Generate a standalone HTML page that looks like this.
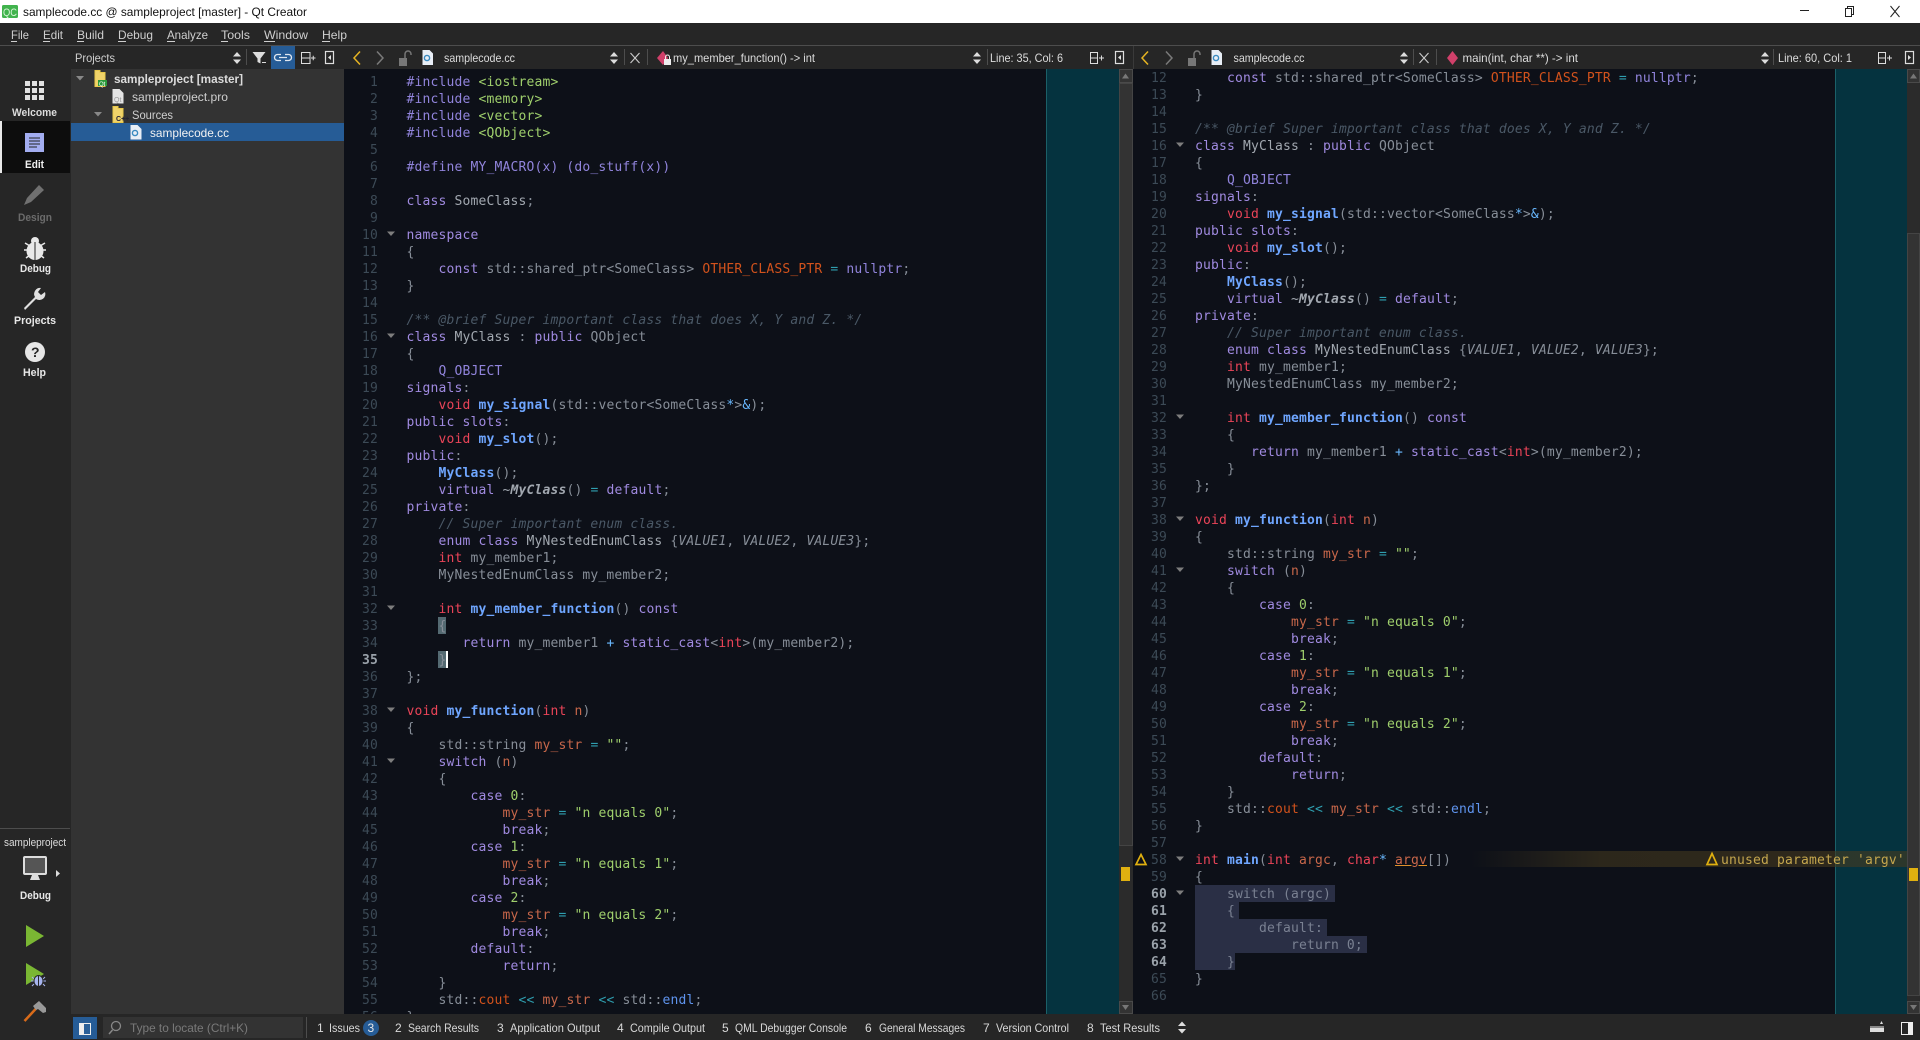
<!DOCTYPE html>
<html lang="en">
<head>
<meta charset="utf-8">
<title>samplecode.cc @ sampleproject [master] - Qt Creator</title>
<style>
html,body{margin:0;padding:0;width:1920px;height:1040px;overflow:hidden;background:#262626}
.a{position:absolute}
pre{margin:0;font-family:"DejaVu Sans Mono","Liberation Mono",monospace;font-size:13px;letter-spacing:.17px;line-height:17px;color:#878e98;white-space:pre}
.ln{color:#3c4a56;text-align:right;width:32px}
.ln b{color:#9aa2aa}
.k{color:#a08ae0}.t{color:#ea4458}.f{color:#6fa6ff;font-weight:bold}
.c{color:#4a5866;font-style:italic}.s{color:#9fcf6c}.v{color:#d2521c}
.m{color:#c8674a}.o{color:#2f9fb0}.u{color:#6ab9ff}.d{color:#9184dc}
.i{font-style:italic}.w{color:#a2a8b0}.e{color:#5f94ee}
.h{color:#7a8192}
svg text{font-family:"Liberation Sans",sans-serif;font-size:12px}
</style>
</head>
<body>
<!-- backgrounds -->
<div class="a" style="left:0;top:0;width:1920px;height:23px;background:#fff"></div>
<div class="a" style="left:0;top:45px;width:1920px;height:1px;background:#4d4d4d"></div>
<div class="a" style="left:0;top:121px;width:70px;height:52px;background:#0d0d0d"></div>
<div class="a" style="left:0;top:121px;width:2px;height:52px;background:#e8e8e8"></div>
<div class="a" style="left:71px;top:69px;width:273px;height:945px;background:#333"></div>
<div class="a" style="left:71px;top:123px;width:272px;height:18px;background:#265c96"></div>

<!-- left editor -->
<div class="a" style="left:344px;top:69px;width:775px;height:945px;background:#0d1018;overflow:hidden">
<div class="a" style="left:702px;top:0;width:73px;height:945px;background:#05333f;border-left:1px solid #1b6068;box-sizing:border-box"></div>
<div class="a" style="left:94px;top:548px;width:8px;height:17px;background:#546a72"></div>
<div class="a" style="left:94px;top:582px;width:8px;height:17px;background:#546a72"></div>
<div class="a" style="left:102px;top:582px;width:2px;height:17px;background:#fff"></div>
<pre class="a ln" style="left:2px;top:5px">1
2
3
4
5
6
7
8
9
10
11
12
13
14
15
16
17
18
19
20
21
22
23
24
25
26
27
28
29
30
31
32
33
34
<b>35</b>
36
37
38
39
40
41
42
43
44
45
46
47
48
49
50
51
52
53
54
55
56</pre>
<pre class="a" style="left:62.5px;top:5px"><span class="d">#include</span> <span class="s">&lt;iostream&gt;</span>
<span class="d">#include</span> <span class="s">&lt;memory&gt;</span>
<span class="d">#include</span> <span class="s">&lt;vector&gt;</span>
<span class="d">#include</span> <span class="s">&lt;QObject&gt;</span>

<span class="d">#define MY_MACRO(x) (do_stuff(x))</span>

<span class="k">class</span> <span class="w">SomeClass</span>;

<span class="k">namespace</span>
{
    <span class="k">const</span> std::shared_ptr&lt;SomeClass&gt; <span class="v">OTHER_CLASS_PTR</span> <span class="o">=</span> <span class="d">nullptr</span>;
}

<span class="c">/** @brief Super important class that does X, Y and Z. */</span>
<span class="k">class</span> <span class="w">MyClass</span> : <span class="k">public</span> QObject
{
    <span class="d">Q_OBJECT</span>
<span class="k">signals</span>:
    <span class="t">void</span> <span class="f">my_signal</span>(std::vector&lt;SomeClass<span class="u">*</span>&gt;<span class="u">&amp;</span>);
<span class="k">public slots</span>:
    <span class="t">void</span> <span class="f">my_slot</span>();
<span class="k">public</span>:
    <span class="f">MyClass</span>();
    <span class="k">virtual</span> <span class="w i">~<b>MyClass</b></span>() <span class="o">=</span> <span class="k">default</span>;
<span class="k">private</span>:
    <span class="c">// Super important enum class.</span>
    <span class="k">enum class</span> <span class="w">MyNestedEnumClass</span> {<span class="i">VALUE1</span>, <span class="i">VALUE2</span>, <span class="i">VALUE3</span>};
    <span class="t">int</span> my_member1;
    MyNestedEnumClass my_member2;

    <span class="t">int</span> <span class="f">my_member_function</span>() <span class="k">const</span>
    {
       <span class="k">return</span> my_member1 <span class="u">+</span> <span class="k">static_cast</span>&lt;<span class="t">int</span>&gt;(my_member2);
    }
};

<span class="t">void</span> <span class="f">my_function</span>(<span class="t">int</span> <span class="m">n</span>)
{
    std::string <span class="m">my_str</span> <span class="o">=</span> <span class="s">""</span>;
    <span class="k">switch</span> (<span class="m">n</span>)
    {
        <span class="k">case</span> <span class="s">0</span>:
            <span class="m">my_str</span> <span class="o">=</span> <span class="s">"n equals 0"</span>;
            <span class="k">break</span>;
        <span class="k">case</span> <span class="s">1</span>:
            <span class="m">my_str</span> <span class="o">=</span> <span class="s">"n equals 1"</span>;
            <span class="k">break</span>;
        <span class="k">case</span> <span class="s">2</span>:
            <span class="m">my_str</span> <span class="o">=</span> <span class="s">"n equals 2"</span>;
            <span class="k">break</span>;
        <span class="k">default</span>:
            <span class="k">return</span>;
    }
    std::<span class="v">cout</span> <span class="o">&lt;&lt;</span> <span class="m">my_str</span> <span class="o">&lt;&lt;</span> std::<span class="e">endl</span>;
}</pre>
</div>

<!-- right editor -->
<div class="a" style="left:1133px;top:69px;width:774px;height:945px;background:#0d1018;overflow:hidden">
<div class="a" style="left:702px;top:0;width:72px;height:945px;background:#05333f;border-left:1px solid #1b6068;box-sizing:border-box"></div>
<div class="a" style="left:338px;top:782px;width:436px;height:16px;background:linear-gradient(90deg,rgba(70,58,30,0),rgba(70,58,30,.55) 30%,rgba(70,58,30,.6))"></div>
<div class="a" style="left:62px;top:816px;width:140px;height:17px;background:#2a2f45"></div>
<div class="a" style="left:62px;top:833px;width:44px;height:17px;background:#2a2f45"></div>
<div class="a" style="left:62px;top:850px;width:132px;height:17px;background:#2a2f45"></div>
<div class="a" style="left:62px;top:867px;width:172px;height:17px;background:#2a2f45"></div>
<div class="a" style="left:62px;top:884px;width:40px;height:17px;background:#2a2f45"></div>
<pre class="a ln" style="left:2px;top:1px">12
13
14
15
16
17
18
19
20
21
22
23
24
25
26
27
28
29
30
31
32
33
34
35
36
37
38
39
40
41
42
43
44
45
46
47
48
49
50
51
52
53
54
55
56
57
58
59
<b>60</b>
<b>61</b>
<b>62</b>
<b>63</b>
<b>64</b>
65
66</pre>
<pre class="a" style="left:62px;top:1px">    <span class="k">const</span> std::shared_ptr&lt;SomeClass&gt; <span class="v">OTHER_CLASS_PTR</span> <span class="o">=</span> <span class="d">nullptr</span>;
}

<span class="c">/** @brief Super important class that does X, Y and Z. */</span>
<span class="k">class</span> <span class="w">MyClass</span> : <span class="k">public</span> QObject
{
    <span class="d">Q_OBJECT</span>
<span class="k">signals</span>:
    <span class="t">void</span> <span class="f">my_signal</span>(std::vector&lt;SomeClass<span class="u">*</span>&gt;<span class="u">&amp;</span>);
<span class="k">public slots</span>:
    <span class="t">void</span> <span class="f">my_slot</span>();
<span class="k">public</span>:
    <span class="f">MyClass</span>();
    <span class="k">virtual</span> <span class="w i">~<b>MyClass</b></span>() <span class="o">=</span> <span class="k">default</span>;
<span class="k">private</span>:
    <span class="c">// Super important enum class.</span>
    <span class="k">enum class</span> <span class="w">MyNestedEnumClass</span> {<span class="i">VALUE1</span>, <span class="i">VALUE2</span>, <span class="i">VALUE3</span>};
    <span class="t">int</span> my_member1;
    MyNestedEnumClass my_member2;

    <span class="t">int</span> <span class="f">my_member_function</span>() <span class="k">const</span>
    {
       <span class="k">return</span> my_member1 <span class="u">+</span> <span class="k">static_cast</span>&lt;<span class="t">int</span>&gt;(my_member2);
    }
};

<span class="t">void</span> <span class="f">my_function</span>(<span class="t">int</span> <span class="m">n</span>)
{
    std::string <span class="m">my_str</span> <span class="o">=</span> <span class="s">""</span>;
    <span class="k">switch</span> (<span class="m">n</span>)
    {
        <span class="k">case</span> <span class="s">0</span>:
            <span class="m">my_str</span> <span class="o">=</span> <span class="s">"n equals 0"</span>;
            <span class="k">break</span>;
        <span class="k">case</span> <span class="s">1</span>:
            <span class="m">my_str</span> <span class="o">=</span> <span class="s">"n equals 1"</span>;
            <span class="k">break</span>;
        <span class="k">case</span> <span class="s">2</span>:
            <span class="m">my_str</span> <span class="o">=</span> <span class="s">"n equals 2"</span>;
            <span class="k">break</span>;
        <span class="k">default</span>:
            <span class="k">return</span>;
    }
    std::<span class="v">cout</span> <span class="o">&lt;&lt;</span> <span class="m">my_str</span> <span class="o">&lt;&lt;</span> std::<span class="e">endl</span>;
}

<span class="t">int</span> <span class="f">main</span>(<span class="t">int</span> <span class="m">argc</span>, <span class="t">char</span><span class="u">*</span> <span class="m" style="text-decoration:underline;text-decoration-color:#e0902a">argv</span>[])
{
<span class="h">    switch (argc)
    {
        default:
            return 0;
    }</span>
}
</pre>
<pre class="a" style="left:588px;top:783px;color:#c4a64e">unused parameter 'argv'</pre>
</div>

<!-- chrome overlay -->
<svg class="a" style="left:0;top:0" width="1920" height="1040" viewBox="0 0 1920 1040" xmlns="http://www.w3.org/2000/svg">
<!-- title bar -->
<rect x="2" y="5" width="16" height="13" rx="1.5" fill="#41b34d"/>
<text x="3" y="16" textLength="14" lengthAdjust="spacingAndGlyphs" fill="#d8f5d8" style="font-size:11px">QC</text>
<text x="23" y="16" textLength="284" lengthAdjust="spacingAndGlyphs" fill="#111">samplecode.cc @ sampleproject [master] - Qt Creator</text>
<rect x="1800" y="10" width="9" height="1" fill="#222"/>
<path d="M1845.500 8.500h6v8h-6zM1847.500 8.500v-2h6v8h-2" fill="none" stroke="#222"/>
<path d="M1890.500 6l9 11M1899.500 6l-9 11" fill="none" stroke="#222"/>
<!-- menu -->
<g fill="#cfcfcf">
<text x="11" y="39" textLength="18" lengthAdjust="spacingAndGlyphs">File</text><rect x="11" y="41" width="6" height="1"/>
<text x="43" y="39" textLength="20" lengthAdjust="spacingAndGlyphs">Edit</text><rect x="43" y="41" width="7" height="1"/>
<text x="77" y="39" textLength="27" lengthAdjust="spacingAndGlyphs">Build</text><rect x="77" y="41" width="7" height="1"/>
<text x="118" y="39" textLength="35" lengthAdjust="spacingAndGlyphs">Debug</text><rect x="118" y="41" width="8" height="1"/>
<text x="167" y="39" textLength="41" lengthAdjust="spacingAndGlyphs">Analyze</text><rect x="167" y="41" width="8" height="1"/>
<text x="221" y="39" textLength="29" lengthAdjust="spacingAndGlyphs">Tools</text><rect x="221" y="41" width="7" height="1"/>
<text x="264" y="39" textLength="44" lengthAdjust="spacingAndGlyphs">Window</text><rect x="264" y="41" width="11" height="1"/>
<text x="322" y="39" textLength="25" lengthAdjust="spacingAndGlyphs">Help</text><rect x="322" y="41" width="8" height="1"/>
</g>
<!-- projects toolbar -->
<text x="75" y="62" textLength="40" lengthAdjust="spacingAndGlyphs" fill="#cfcfcf">Projects</text>
<path d="M233 56.500l4-4.500 4 4.500zM233 59.500h8l-4 4.500z" fill="#ddd"/>
<rect x="246" y="49" width="1" height="16" fill="#4d4d4d"/>
<path d="M252.500 52h13l-5 6.500v5l-3-1.500v-3.500z" fill="#ddd"/><rect x="262" y="62" width="4" height="1" fill="#ddd"/>
<rect x="271" y="46" width="24" height="23" fill="#265c96"/>
<path d="M281 54.500h-3.500a3 3 0 0 0 0 6h3.500M285 54.500h3.500a3 3 0 0 1 0 6h-3.500M279 57.500h8" fill="none" stroke="#dfe7f0" stroke-width="1.300"/>
<path d="M301.500 52.500h8.500v11h-8.500zM301.500 58h8.500M311 58h4.500M313.250 55.700v4.600" fill="none" stroke="#ddd"/>
<rect x="325.500" y="51.500" width="8" height="12" fill="none" stroke="#ddd" stroke-width="1.200"/><path d="M331 55v5l-3-2.500z" fill="#ddd"/>
<!-- tree -->
<path d="M76 76h8l-4 4.500zM94 112h8l-4 4.500z" fill="#888"/>
<path d="M95 70.500h5v2h5v14h-10z" fill="#f0d36a" stroke="#e8c84a"/><rect x="98" y="80" width="9" height="6" fill="#2a9a3a"/>
<text x="99" y="86" fill="#fff" style="font-size:6px">Qt</text>
<path d="M113 106.500h5v2h5v14h-10z" fill="#f0d36a" stroke="#e8c84a"/>
<text x="116" y="121" fill="#223" style="font-size:7px;font-weight:bold">C++</text>
<text x="114" y="83" textLength="129" lengthAdjust="spacingAndGlyphs" fill="#dcdcdc" style="font-weight:bold">sampleproject [master]</text>
<path d="M112.500 89h7l4 4v10.500h-11z" fill="#e4e4e4"/><text x="114" y="102" fill="#999" style="font-size:7px">Qt</text>
<text x="132" y="101" textLength="96" lengthAdjust="spacingAndGlyphs" fill="#cfcfcf">sampleproject.pro</text>
<text x="132" y="119" textLength="41" lengthAdjust="spacingAndGlyphs" fill="#cfcfcf">Sources</text>
<path d="M130.500 125h7l4 4v10.500h-11z" fill="#e8eef6"/><circle cx="135" cy="133" r="2.600" fill="none" stroke="#3a8ac0" stroke-width="1.400"/>
<text x="150" y="137" textLength="79" lengthAdjust="spacingAndGlyphs" fill="#f2f2f2">samplecode.cc</text>
<!-- left editor toolbar -->
<path d="M360 51.500l-6 6.500 6 6.500" fill="none" stroke="#e6b422" stroke-width="1.500"/>
<path d="M377 51.500l6 6.500-6 6.500" fill="none" stroke="#7a7a7a" stroke-width="1.500"/>
<rect x="399" y="58" width="8" height="8" fill="#777"/><path d="M405 58v-4a3 3 0 0 1 6 0v1" fill="none" stroke="#777" stroke-width="1.500"/>
<path d="M422.500 50h7l3.500 3.500v11.500h-10.500z" fill="#e8eef6"/><circle cx="427" cy="58" r="2.600" fill="none" stroke="#3a8ac0" stroke-width="1.400"/>
<text x="444" y="62" textLength="71" lengthAdjust="spacingAndGlyphs" fill="#dcdcdc">samplecode.cc</text>
<path d="M610 56.500l4-4.500 4 4.500zM610 59.500h8l-4 4.500z" fill="#ddd"/>
<rect x="624" y="49" width="1" height="16" fill="#4d4d4d"/>
<path d="M630.500 53l9 10M639.500 53l-9 10" stroke="#ccc" fill="none" stroke-width="1.100"/>
<rect x="647" y="49" width="1" height="16" fill="#4d4d4d"/>
<path d="M657 58l6-7 5 7-5 7z" fill="#d0406a"/><rect x="664" y="59" width="7" height="6" fill="#eee"/><path d="M665.500 59v-2a2 2 0 0 1 4 0v2" fill="none" stroke="#eee"/>
<text x="673" y="62" textLength="142" lengthAdjust="spacingAndGlyphs" fill="#dcdcdc">my_member_function() -&gt; int</text>
<path d="M973 56.500l4-4.500 4 4.500zM973 59.500h8l-4 4.500z" fill="#ddd"/>
<rect x="987" y="49" width="1" height="16" fill="#4d4d4d"/>
<text x="990" y="62" textLength="73" lengthAdjust="spacingAndGlyphs" fill="#dcdcdc">Line: 35, Col: 6</text>
<path d="M1090.500 52.500h7v11h-7zM1090.500 58h7M1099 58h5M1101.500 55.500v5" fill="none" stroke="#ddd"/>
<rect x="1115.500" y="51.500" width="8" height="12" fill="none" stroke="#ddd" stroke-width="1.200"/><path d="M1121 55v5l-3-2.500z" fill="#ddd"/>
<!-- right editor toolbar -->
<rect x="1133" y="46" width="1" height="23" fill="#3a3a3a"/>
<path d="M1148 51.500l-6 6.500 6 6.500" fill="none" stroke="#e6b422" stroke-width="1.500"/>
<path d="M1166 51.500l6 6.500-6 6.500" fill="none" stroke="#7a7a7a" stroke-width="1.500"/>
<rect x="1188" y="58" width="8" height="8" fill="#777"/><path d="M1194 58v-4a3 3 0 0 1 6 0v1" fill="none" stroke="#777" stroke-width="1.500"/>
<path d="M1211.500 50h7l3.500 3.500v11.500h-10.500z" fill="#e8eef6"/><circle cx="1216" cy="58" r="2.600" fill="none" stroke="#3a8ac0" stroke-width="1.400"/>
<text x="1233.500" y="62" textLength="71" lengthAdjust="spacingAndGlyphs" fill="#dcdcdc">samplecode.cc</text>
<path d="M1400 56.500l4-4.500 4 4.500zM1400 59.500h8l-4 4.500z" fill="#ddd"/>
<rect x="1413" y="49" width="1" height="16" fill="#4d4d4d"/>
<path d="M1419.500 53l9 10M1428.500 53l-9 10" stroke="#ccc" fill="none" stroke-width="1.100"/>
<rect x="1436" y="49" width="1" height="16" fill="#4d4d4d"/>
<path d="M1447 58l5.500-7 5.500 7-5.500 7z" fill="#d0406a"/>
<text x="1462.500" y="62" textLength="115.500" lengthAdjust="spacingAndGlyphs" fill="#dcdcdc">main(int, char **) -&gt; int</text>
<path d="M1761 56.500l4-4.500 4 4.500zM1761 59.500h8l-4 4.500z" fill="#ddd"/>
<rect x="1773" y="49" width="1" height="16" fill="#4d4d4d"/>
<text x="1778" y="62" textLength="74" lengthAdjust="spacingAndGlyphs" fill="#dcdcdc">Line: 60, Col: 1</text>
<path d="M1878.500 52.500h7v11h-7zM1878.500 58h7M1887 58h5M1889.500 55.500v5" fill="none" stroke="#ddd"/>
<rect x="1905.500" y="51.500" width="8" height="12" fill="none" stroke="#ddd" stroke-width="1.200"/><path d="M1908 55v5l3-2.500z" fill="#ddd"/>
<!-- scrollbars -->
<g>
<rect x="1119" y="69" width="14" height="945" fill="#2b2b2b"/>
<rect x="1119.500" y="69.500" width="13" height="13" fill="#333" stroke="#4a4a4a"/>
<path d="M1122 78.500h7l-3.500-5z" fill="#777"/>
<rect x="1119.500" y="83.500" width="13" height="762" fill="#333" stroke="#444"/>
<rect x="1119.500" y="1001.500" width="13" height="12" fill="#333" stroke="#4a4a4a"/>
<path d="M1122 1005h7l-3.500 5z" fill="#777"/>
<rect x="1121" y="867" width="9" height="14" fill="#e0b010"/>
<rect x="1907" y="69" width="13" height="945" fill="#2b2b2b"/>
<rect x="1907.500" y="69.500" width="12" height="13" fill="#333" stroke="#4a4a4a"/>
<path d="M1910 78.500h7l-3.500-5z" fill="#777"/>
<rect x="1907.500" y="233.500" width="12" height="762" fill="#333" stroke="#444"/>
<rect x="1907.500" y="1001.500" width="12" height="12" fill="#333" stroke="#4a4a4a"/>
<path d="M1910 1005h7l-3.500 5z" fill="#777"/>
<rect x="1909" y="868" width="9" height="13" fill="#e0b010"/>
</g>
<rect x="343" y="123" width="1" height="18" fill="#265c96"/>
<!-- fold markers -->
<g fill="#7d7d7d">
<path d="M387 231.500h8l-4 4.500zM387 333.500h8l-4 4.500zM387 605.500h8l-4 4.500zM387 707.500h8l-4 4.500zM387 758.500h8l-4 4.500z"/>
<path d="M1176 142.500h8l-4 4.500zM1176 414.500h8l-4 4.500zM1176 516.500h8l-4 4.500zM1176 567.500h8l-4 4.500zM1176 856.500h8l-4 4.500zM1176 890.500h8l-4 4.500z"/>
</g>
<!-- warnings -->
<path d="M1141 854.500l5 10h-10z" fill="none" stroke="#e0b010" stroke-width="1.700"/>
<path d="M1712 853.500l5 11h-10z" fill="none" stroke="#e0b010" stroke-width="1.700"/>
<!-- sidebar icons -->
<g fill="#e0e0e0">
<rect x="25" y="81" width="5" height="5"/><rect x="32" y="81" width="5" height="5"/><rect x="39" y="81" width="5" height="5"/>
<rect x="25" y="88" width="5" height="5"/><rect x="32" y="88" width="5" height="5"/><rect x="39" y="88" width="5" height="5"/>
<rect x="25" y="95" width="5" height="5"/><rect x="32" y="95" width="5" height="5"/><rect x="39" y="95" width="5" height="5"/>
</g>
<rect x="25" y="133" width="19" height="19" fill="#a3adf0"/>
<path d="M29 138h11M29 141h11M29 144h11M29 147h8" stroke="#222" stroke-width="1"/>
<path d="M24 205l3-7 12-13 5 5-13 12z" fill="#707070"/>
<!-- bug -->
<path d="M25 243l5 3M45 243l-5 3M24 250h5M46 250h-5M26 258l4-3M44 258l-4-3" stroke="#e8e8e8" stroke-width="1.500" fill="none"/>
<circle cx="35" cy="241" r="4" fill="#e8e8e8"/>
<ellipse cx="35" cy="251" rx="8.500" ry="9" fill="#e8e8e8"/>
<path d="M35 242v19" stroke="#262626"/>
<path d="M26 307l11-11a6 6 0 0 1 6-9l-3 4 3 3 4-3a6 6 0 0 1-9 7l-11 11z" fill="#e0e0e0" transform="translate(-2,1)"/>
<circle cx="35" cy="352" r="10" fill="#e6e6e6"/>
<text x="31" y="357" fill="#262626" style="font-size:14px;font-weight:bold">?</text>
<g style="font-weight:bold">
<text x="12" y="116" textLength="45" lengthAdjust="spacingAndGlyphs" fill="#dcdcdc" style="font-size:11px">Welcome</text>
<text x="25" y="168" textLength="19" lengthAdjust="spacingAndGlyphs" fill="#f2f2f2" style="font-size:11px">Edit</text>
<text x="18" y="221" textLength="34" lengthAdjust="spacingAndGlyphs" fill="#6b6b6b" style="font-size:11px">Design</text>
<text x="20" y="272" textLength="31" lengthAdjust="spacingAndGlyphs" fill="#e8e8e8" style="font-size:11px">Debug</text>
<text x="14" y="324" textLength="42" lengthAdjust="spacingAndGlyphs" fill="#e8e8e8" style="font-size:11px">Projects</text>
<text x="23" y="376" textLength="23" lengthAdjust="spacingAndGlyphs" fill="#e8e8e8" style="font-size:11px">Help</text>
<text x="20" y="899" textLength="31" lengthAdjust="spacingAndGlyphs" fill="#e8e8e8" style="font-size:11px">Debug</text>
</g>
<rect x="0" y="828" width="70" height="1" fill="#4d4d4d"/>
<text x="4" y="846" textLength="62" lengthAdjust="spacingAndGlyphs" fill="#dcdcdc" style="font-size:11px">sampleproject</text>
<rect x="24" y="857" width="22" height="17" rx="1" fill="#555" stroke="#ddd" stroke-width="2"/>
<path d="M32 875h6l2 5h-10z" fill="#ddd"/>
<path d="M56 870l4 3.500-4 3.500z" fill="#ddd"/>
<path d="M26 925l18 11-18 11z" fill="#7ab733"/>
<path d="M26 963l18 11-18 11z" fill="#7ab733"/>
<path d="M32 977l2 2M45 977l-2 2M31 981h3M46 981h-3M32 986l2-2M45 986l-2-2" stroke="#a7b4ee" fill="none"/>
<ellipse cx="38.500" cy="981" rx="4.500" ry="5.500" fill="#a7b4ee" stroke="#262626"/>
<path d="M38.500 975.500v11" stroke="#262626"/>
<path d="M24.500 1021l13-14" stroke="#d86b1a" stroke-width="2.500" fill="none"/>
<path d="M33 1006l6-5 7 7v4l-3 1-5-4-2 1z" fill="#999"/>
<!-- bottom bar -->
<rect x="73" y="1017" width="24" height="22" fill="#265c96"/>
<rect x="79.500" y="1023.500" width="11" height="11" fill="#2a5f98" stroke="#eee"/><rect x="80" y="1024" width="4" height="10" fill="#eee"/>
<rect x="103" y="1017" width="200" height="21" fill="#333"/>
<circle cx="116" cy="1026" r="4.500" fill="none" stroke="#888" stroke-width="1.300"/><path d="M112.500 1030l-3.500 4" stroke="#888" stroke-width="1.500"/>
<text x="130" y="1032" textLength="118" lengthAdjust="spacingAndGlyphs" fill="#7a7a7a">Type to locate (Ctrl+K)</text>
<rect x="306" y="1017" width="1" height="21" fill="#4d4d4d"/>
<g fill="#d8d8d8">
<text x="317" y="1032">1</text><text x="329" y="1032" textLength="31" lengthAdjust="spacingAndGlyphs">Issues</text>
<text x="395" y="1032">2</text><text x="408" y="1032" textLength="71" lengthAdjust="spacingAndGlyphs">Search Results</text>
<text x="497" y="1032">3</text><text x="510" y="1032" textLength="90" lengthAdjust="spacingAndGlyphs">Application Output</text>
<text x="617" y="1032">4</text><text x="630" y="1032" textLength="75" lengthAdjust="spacingAndGlyphs">Compile Output</text>
<text x="722" y="1032">5</text><text x="735" y="1032" textLength="112" lengthAdjust="spacingAndGlyphs">QML Debugger Console</text>
<text x="865" y="1032">6</text><text x="879" y="1032" textLength="86" lengthAdjust="spacingAndGlyphs">General Messages</text>
<text x="983" y="1032">7</text><text x="996" y="1032" textLength="73" lengthAdjust="spacingAndGlyphs">Version Control</text>
<text x="1087" y="1032">8</text><text x="1100" y="1032" textLength="60" lengthAdjust="spacingAndGlyphs">Test Results</text>
</g>
<rect x="363" y="1020" width="16" height="16" rx="8" fill="#265c96"/>
<text x="367.500" y="1032" fill="#e8e8e8">3</text>
<path d="M1178 1026l4-4.500 4 4.500zM1178 1029h8l-4 4.500z" fill="#ddd"/>
<rect x="1870" y="1026" width="14" height="6" fill="#ddd"/><rect x="1870" y="1026" width="14" height="2" fill="#888"/><path d="M1880 1024h3l-1.500-3z" fill="#ddd"/>
<rect x="1901.500" y="1022.500" width="11" height="12" fill="#262626" stroke="#eee"/><rect x="1908" y="1023" width="4" height="11" fill="#eee"/>
</svg>
</body>
</html>
